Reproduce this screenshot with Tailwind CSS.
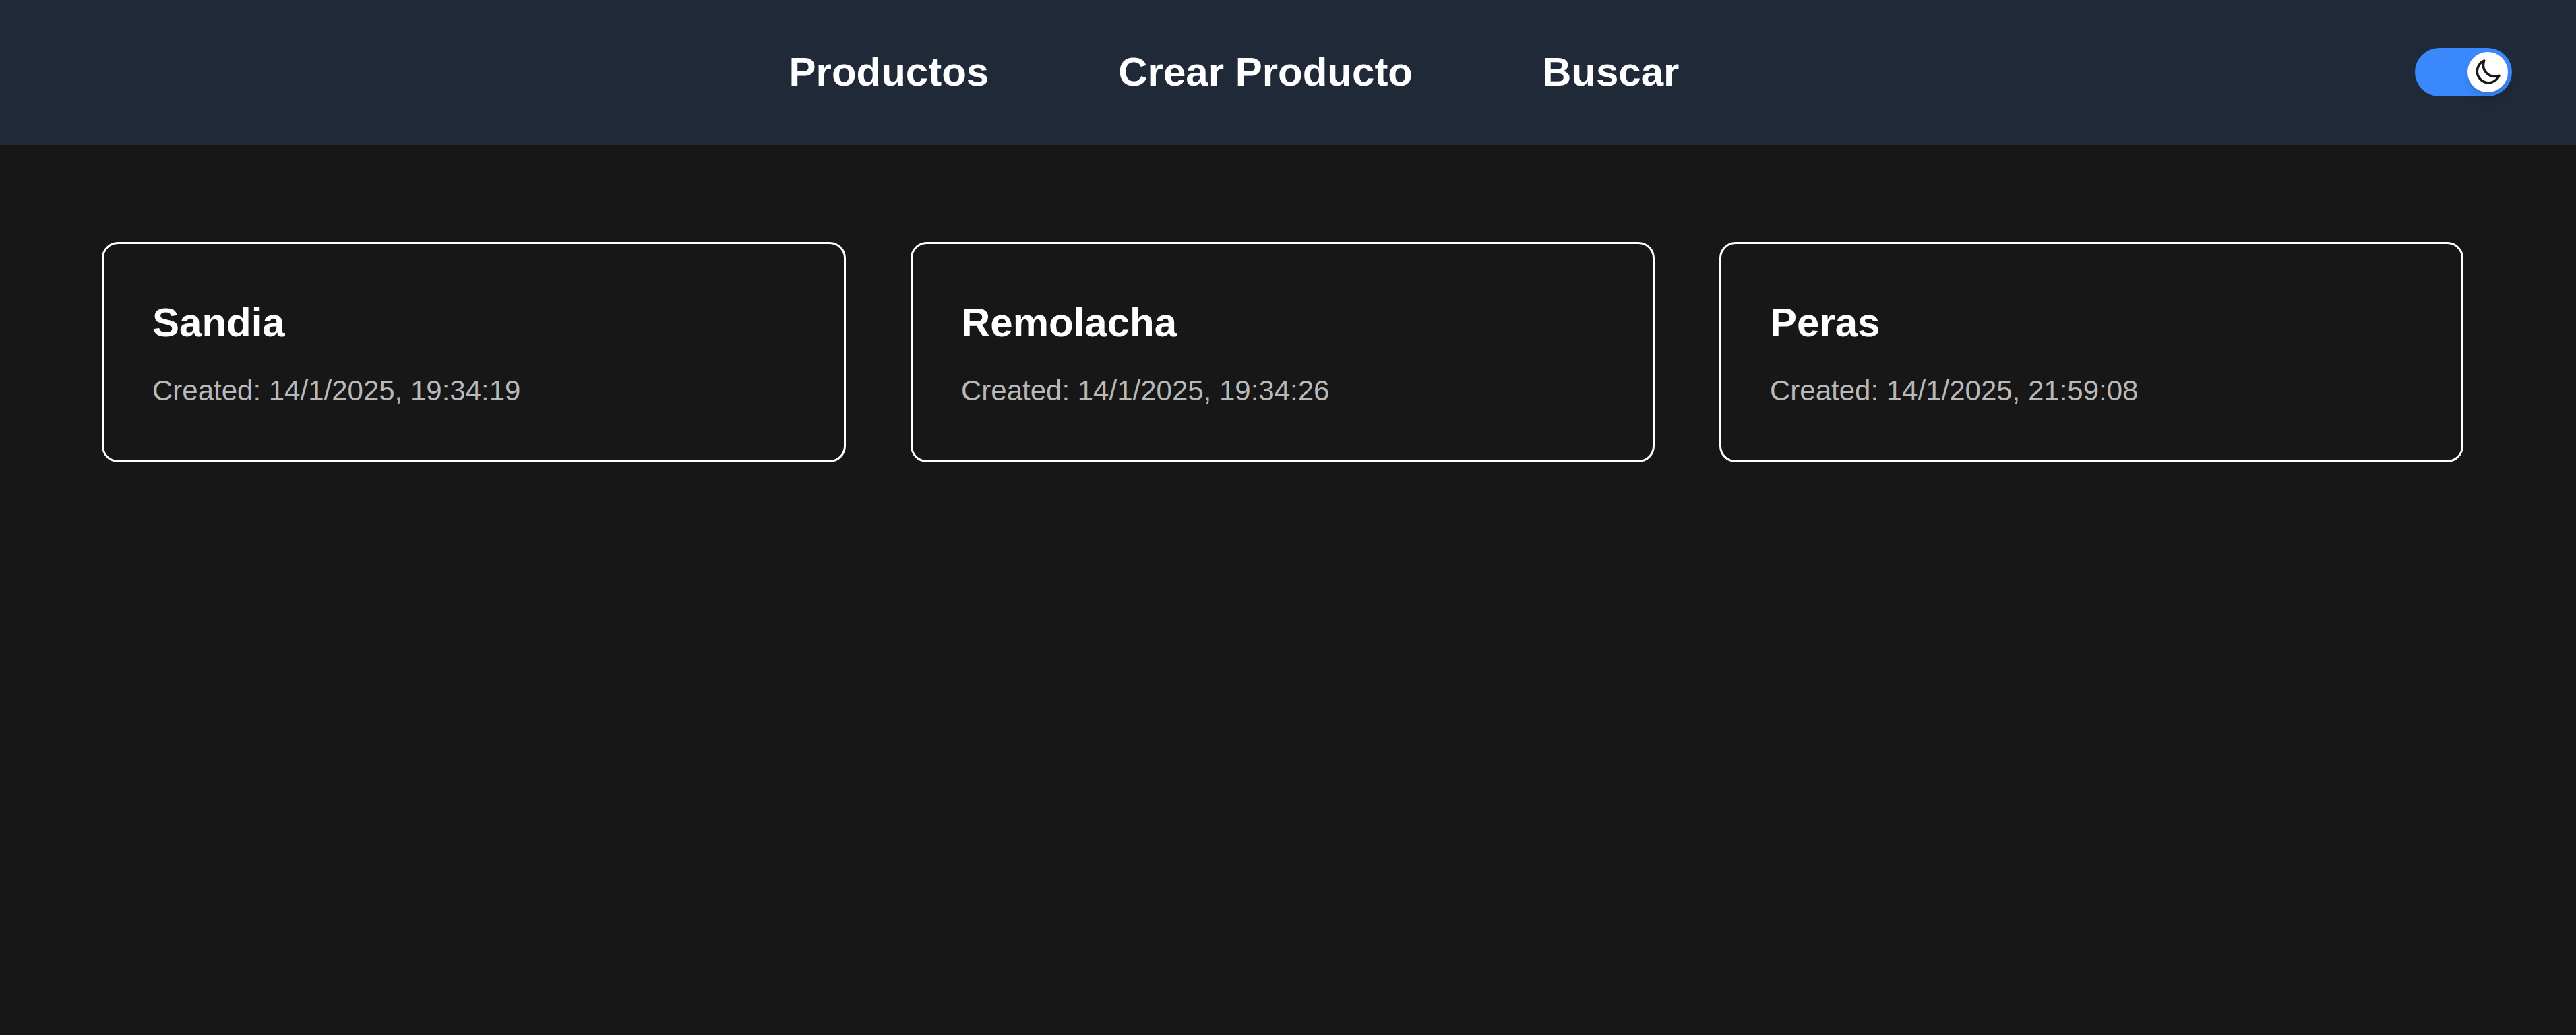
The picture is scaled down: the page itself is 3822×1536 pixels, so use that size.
<!DOCTYPE html>
<html lang="es">
<head>
<meta charset="utf-8">
<meta name="viewport" content="width=device-width, initial-scale=1">
<title>Productos</title>
<script src="https://cdn.jsdelivr.net/npm/@tailwindcss/browser@4"></script>
</head>
<body class="min-h-screen bg-[#171717] text-white font-['Liberation_Sans',Arial,sans-serif]">
<header class="flex items-center bg-[#1f2937] pt-[62px] pb-[63px] pl-[79px] pr-[95px]">
  <nav class="flex flex-1 justify-center gap-48 text-[60px] leading-[90px] font-bold">
    <a href="#productos">Productos</a>
    <a href="#crear">Crear Producto</a>
    <a href="#buscar">Buscar</a>
  </nav>
  <button type="button" role="switch" aria-checked="true" aria-label="Modo oscuro" class="flex h-[72px] w-36 items-center justify-end rounded-full bg-[#3b88fd] p-1.5">
    <span class="flex size-[60px] items-center justify-center rounded-full bg-white shadow-[0_12px_18px_-3px_rgba(0,0,0,0.1),0_6px_12px_-6px_rgba(0,0,0,0.1)]">
      <svg class="size-[42px] text-[#171717]" viewBox="0 0 24 24" fill="none" stroke="currentColor" stroke-width="2" stroke-linecap="round" stroke-linejoin="round" aria-hidden="true"><path d="M21.752 15.002A9.718 9.718 0 0 1 18 15.75c-5.385 0-9.75-4.365-9.75-9.75 0-1.33.266-2.597.748-3.752A9.753 9.753 0 0 0 3 11.25C3 16.635 7.365 21 12.75 21a9.753 9.753 0 0 0 9.002-5.998Z"/></svg>
    </span>
  </button>
</header>
<main class="grid grid-cols-3 gap-24 pt-36 pb-36 pl-[151px] pr-[167px]">
  <article class="rounded-3xl border-3 border-white p-18">
    <h2 class="mb-6 text-[60px] leading-[90px] font-bold">Sandia</h2>
    <p class="text-[42px] leading-[63px] text-[#b9b9b9]">Created: 14/1/2025, 19:34:19</p>
  </article>
  <article class="rounded-3xl border-3 border-white p-18">
    <h2 class="mb-6 text-[60px] leading-[90px] font-bold">Remolacha</h2>
    <p class="text-[42px] leading-[63px] text-[#b9b9b9]">Created: 14/1/2025, 19:34:26</p>
  </article>
  <article class="rounded-3xl border-3 border-white p-18">
    <h2 class="mb-6 text-[60px] leading-[90px] font-bold">Peras</h2>
    <p class="text-[42px] leading-[63px] text-[#b9b9b9]">Created: 14/1/2025, 21:59:08</p>
  </article>
</main>
</body>
</html>
